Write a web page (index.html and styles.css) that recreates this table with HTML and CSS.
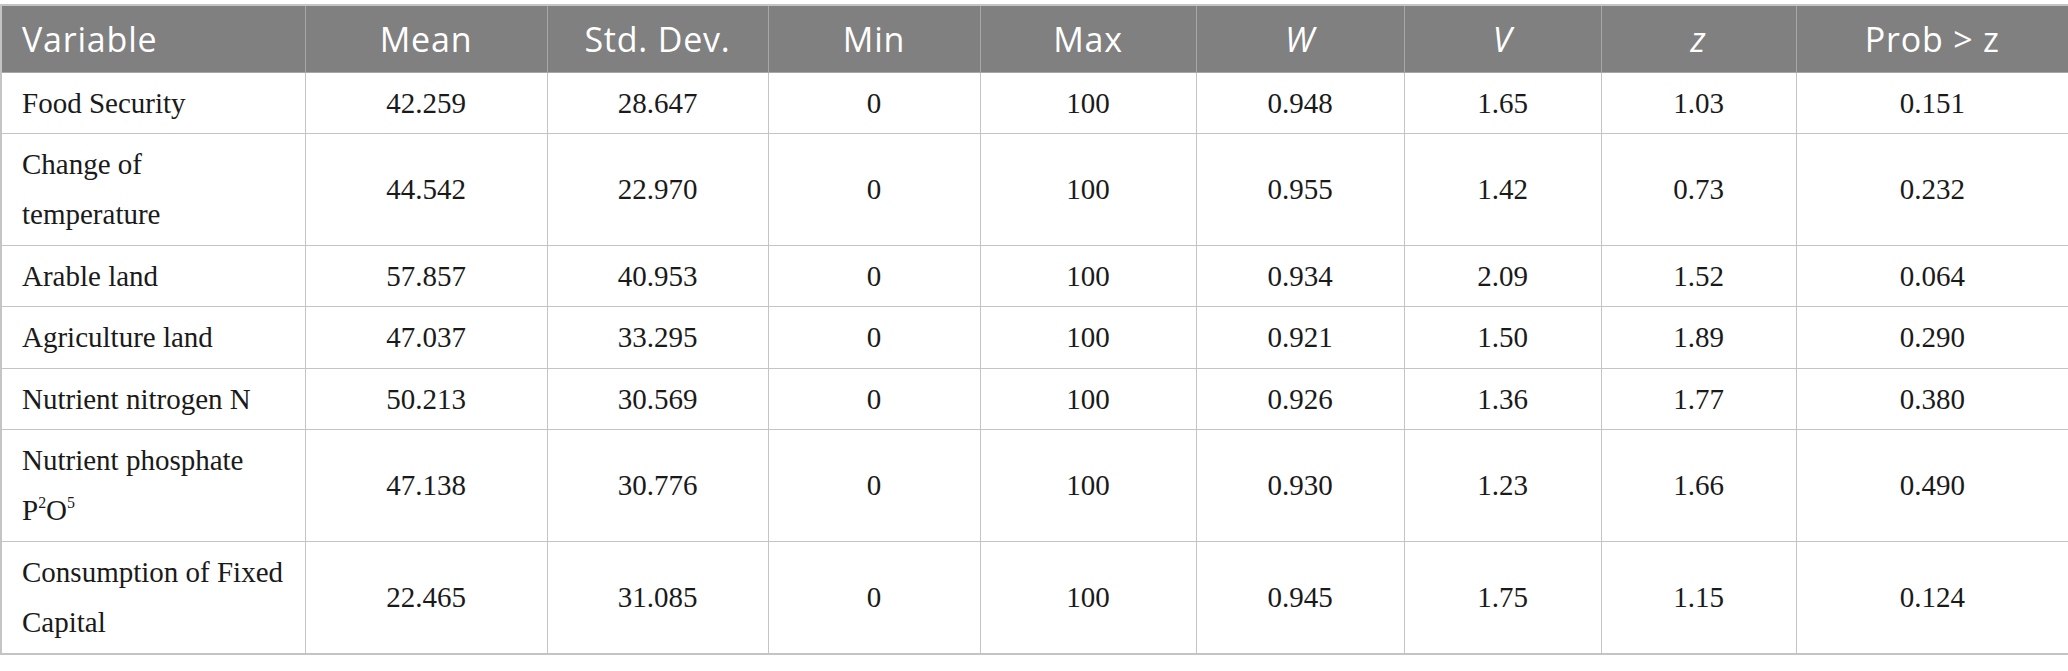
FILE: index.html
```html
<!DOCTYPE html>
<html lang="en">
<head>
<meta charset="utf-8">
<title>Descriptive statistics</title>
<link rel="stylesheet" href="styles.css">
</head>
<body>
<table class="stats">
  <colgroup>
    <col class="c-var"><col class="c-mean"><col class="c-sd"><col class="c-min"><col class="c-max"><col class="c-w"><col class="c-v"><col class="c-z"><col class="c-p">
  </colgroup>
  <thead>
    <tr>
      <th class="left">Variable</th>
      <th>Mean</th>
      <th>Std. Dev.</th>
      <th>Min</th>
      <th>Max</th>
      <th><i>W</i></th>
      <th><i>V</i></th>
      <th><i>z</i></th>
      <th>Prob &gt; z</th>
    </tr>
  </thead>
  <tbody>
    <tr><td class="left">Food Security</td><td>42.259</td><td>28.647</td><td>0</td><td>100</td><td>0.948</td><td>1.65</td><td>1.03</td><td>0.151</td></tr>
    <tr><td class="left">Change of<br>temperature</td><td>44.542</td><td>22.970</td><td>0</td><td>100</td><td>0.955</td><td>1.42</td><td>0.73</td><td>0.232</td></tr>
    <tr><td class="left">Arable land</td><td>57.857</td><td>40.953</td><td>0</td><td>100</td><td>0.934</td><td>2.09</td><td>1.52</td><td>0.064</td></tr>
    <tr><td class="left">Agriculture land</td><td>47.037</td><td>33.295</td><td>0</td><td>100</td><td>0.921</td><td>1.50</td><td>1.89</td><td>0.290</td></tr>
    <tr><td class="left">Nutrient nitrogen N</td><td>50.213</td><td>30.569</td><td>0</td><td>100</td><td>0.926</td><td>1.36</td><td>1.77</td><td>0.380</td></tr>
    <tr><td class="left">Nutrient phosphate<br>P<sup>2</sup>O<sup>5</sup></td><td>47.138</td><td>30.776</td><td>0</td><td>100</td><td>0.930</td><td>1.23</td><td>1.66</td><td>0.490</td></tr>
    <tr><td class="left">Consumption of Fixed<br>Capital</td><td>22.465</td><td>31.085</td><td>0</td><td>100</td><td>0.945</td><td>1.75</td><td>1.15</td><td>0.124</td></tr>
  </tbody>
</table>
</body>
</html>
```
FILE: styles.css
```css
html, body {
  margin: 0;
  padding: 0;
  background: #ffffff;
}

body {
  padding-top: 4px;
}

.stats {
  border-collapse: collapse;
  table-layout: fixed;
  width: 2068px;
  border: 2px solid #c4c4c4;
  font-family: "Liberation Serif", "Times New Roman", serif;
  color: #1a1a1a;
}

.c-var { width: 304px; }
.c-mean { width: 242px; }
.c-sd { width: 221px; }
.c-min { width: 212px; }
.c-max { width: 216px; }
.c-w { width: 208px; }
.c-v { width: 197px; }
.c-z { width: 195px; }
.c-p { width: 273px; }

.stats th {
  background: #7f807f;
  color: #ffffff;
  font-family: "Open Sans", "DejaVu Sans", sans-serif;
  font-weight: 400;
  font-size: 34px;
  letter-spacing: 0.8px;
  line-height: 44px;
  height: 67px;
  padding: 0 20px;
  text-align: center;
  vertical-align: middle;
  border: 1px solid #a6a7a6;
  border-top: 2px solid #c4c4c4;
  box-sizing: border-box;
}

.stats th i {
  font-style: italic;
}

.stats td {
  font-size: 29px;
  line-height: 50.4px;
  padding: 5px 20px;
  text-align: center;
  vertical-align: middle;
  border: 1px solid #c4c4c4;
}

.stats .left {
  text-align: left;
}

.stats sup {
  font-size: 0.55em;
  line-height: 0;
  vertical-align: 0.75em;
}
```
